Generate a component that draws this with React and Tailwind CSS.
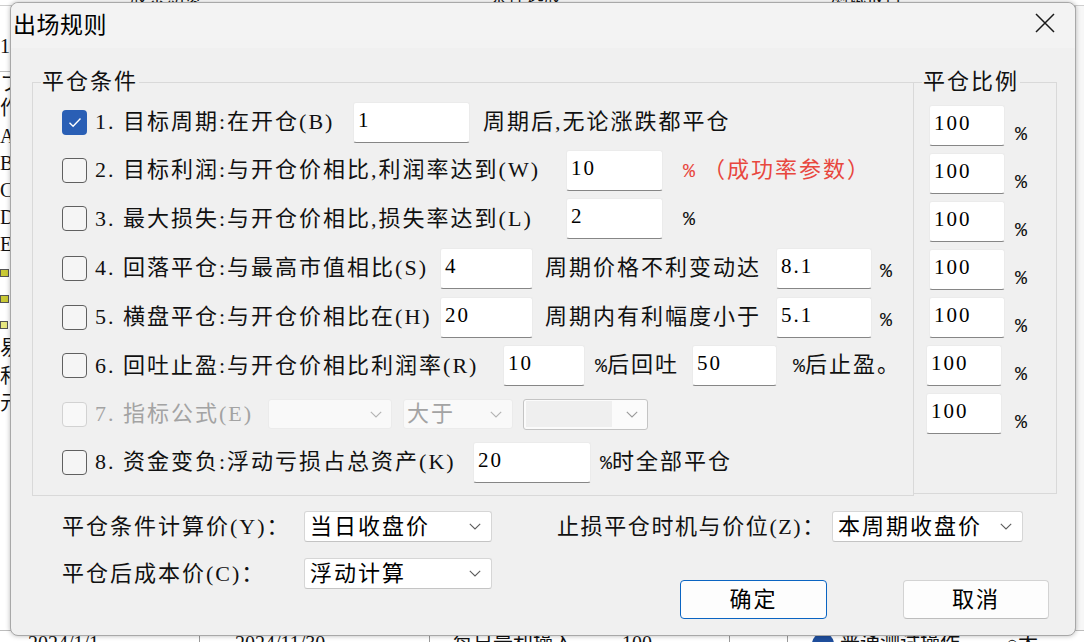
import React from "react";

const serif = "font-['Liberation_Serif','Noto_Sans_CJK_SC',sans-serif]";

function Check({ state }) {
  if (state === "on") {
    return (
      <div className="w-[25px] h-[25px] shrink-0 rounded-[4px] bg-[#2a5fb5] flex items-center justify-center">
        <svg width="14" height="11" viewBox="0 0 14 11">
          <path d="M1.5 5.8l3.6 3.4 7.4-7.7" stroke="#ffffff" strokeWidth="1.4" fill="none" />
        </svg>
      </div>
    );
  }
  if (state === "dis") {
    return <div className="w-[25px] h-[25px] shrink-0 rounded-[4px] border border-[#d2d2d2] bg-[#f8f8f8]" />;
  }
  return <div className="w-[25px] h-[25px] shrink-0 rounded-[4px] border border-[#606060] bg-[#f5f5f5]" />;
}

function Box({ v, w }) {
  return (
    <div
      className={`h-[41px] ${w} shrink-0 bg-white border border-[#ebebeb] border-b-[#868686] rounded-[3px] pl-[4px] pt-[7px] text-[21px] leading-[21px] tracking-[2px] text-black font-['Liberation_Serif',serif]`}
    >
      {v}
    </div>
  );
}

function Chevron({ color = "#5c5c5c" }) {
  return (
    <svg width="12" height="7" viewBox="0 0 12 7" className="shrink-0">
      <path d="M0.8 0.8l5.2 5.2 5.2-5.2" stroke={color} strokeWidth="1.1" fill="none" />
    </svg>
  );
}

function Pct({ cls = "" }) {
  return <span className={`font-['Liberation_Mono',monospace] text-[20px] tracking-normal ${cls}`}>%</span>;
}

function Row({ h, children }) {
  return <div className={`flex items-center ${h} whitespace-nowrap`}>{children}</div>;
}

function RightRow({ v, shift }) {
  return (
    <div className="flex items-center h-[48px]">
      <div className={shift}>
        <Box v={v} w="w-[76px]" />
      </div>
      <span className="ml-[10px] pt-[16px]">
        <Pct />
      </span>
    </div>
  );
}

function Select({ w, text }) {
  return (
    <div
      className={`h-[31px] ${w} shrink-0 flex items-center justify-between bg-white border border-[#d6d6d6] border-b-[#c4c4c4] rounded-[3px] pl-[5px] pr-[10px] text-[22px] leading-none tracking-[2px] text-black`}
    >
      <span>{text}</span>
      <Chevron />
    </div>
  );
}

export default function App() {
  return (
    <div className={`relative w-[1084px] h-[642px] overflow-hidden bg-[#f4f4f4] ${serif} text-[#111111]`}>
      {/* background application */}
      <div className="flex flex-col w-full h-full">
        <div className="h-[6px] overflow-hidden flex pl-[130px] text-[18px] leading-none border-b border-[#cfcfcf] bg-white">
          <span className="w-[360px] -mt-[12px]">股票期货</span>
          <span className="w-[340px] -mt-[12px]">条件选股</span>
          <span className="-mt-[12px]">测试报告</span>
        </div>
        <div className="flex flex-1">
          <div className="w-[10px] bg-white flex flex-col text-[20px] leading-none overflow-hidden">
            <div className="h-[30px]" />
            <span className="h-[26px]">1</span>
            <div className="h-[10px] border-b border-[#bdbdbd]" />
            <span className="h-[26px] pt-[2px]">フ</span>
            <span className="h-[28px]">作</span>
            <span className="h-[27px]">A.</span>
            <span className="h-[27px]">B.</span>
            <span className="h-[27px]">C.</span>
            <span className="h-[27px]">D.</span>
            <span className="h-[26px]">E.</span>
            <div className="h-[26px] flex items-center"><div className="w-[9px] h-[8px] bg-[#c9c935] border border-[#555]" /></div>
            <div className="h-[26px] flex items-center"><div className="w-[9px] h-[8px] bg-[#c9c935] border border-[#555]" /></div>
            <div className="h-[26px] flex items-center"><div className="w-[8px] h-[8px] bg-[#e6e680] border border-[#555]" /></div>
            <span className="h-[28px]">易</span>
            <span className="h-[27px]">和</span>
            <span className="h-[27px]">元</span>
          </div>
          <div className="flex-1" />
          <div className="w-[9px] bg-[#f7f7f7] border-l border-[#c8c8c8]" />
        </div>
        <div className="h-[12px] flex items-start text-[20px] leading-none bg-white border-t border-[#bdbdbd] overflow-hidden">
          <span className="w-[200px] pl-[28px] pt-[2px] border-r border-[#999]">2024/1/1</span>
          <span className="w-[230px] pl-[35px] pt-[2px] border-r border-[#999]">2024/11/30</span>
          <span className="w-[170px] pl-[23px] pt-[2px]">每日最利操入</span>
          <span className="w-[130px] pl-[22px] pt-[2px] border-r border-[#999]">100</span>
          <span className="w-[58px] pl-[10px] pt-[2px] border-r border-[#999]">—</span>
          <span className="w-[218px] pl-[24px] pt-[2px] flex gap-[6px]"><span className="w-[22px] h-[22px] rounded-full bg-[#1f4e9c]" />普通测试操作</span>
          <span className="pt-[2px]">○大</span>
        </div>
      </div>

      {/* dialog window */}
      <div className="absolute left-[10px] top-[2px] w-[1066px] h-[634px] flex flex-col bg-[#f0f0f0] rounded-[8px] border border-[#a8a8a8] shadow-[0_0_5px_rgba(0,0,0,0.28)]">
        {/* title bar */}
        <div className="h-[45px] shrink-0 flex items-center justify-between pl-[2px] pr-[19px] pb-[5px] bg-[#f3f3f3] rounded-t-[8px]">
          <span className="font-['Noto_Sans_CJK_SC',sans-serif] text-[23px] leading-none tracking-[0.5px] text-black">出场规则</span>
          <svg width="22" height="22" viewBox="0 0 22 22">
            <path d="M2 2l18 18M20 2L2 20" stroke="#1a1a1a" strokeWidth="1.5" fill="none" />
          </svg>
        </div>

        {/* body */}
        <div className="flex flex-col pt-[34px] pl-[21px] text-[22px] leading-none tracking-[2px]">
          <div className="flex items-start">
            {/* 平仓条件 group */}
            <div className="relative w-[882px] shrink-0 border border-[#d9d9d9] pl-[29px] pt-[15px] pb-[9px]">
              <span className="absolute -top-[12px] left-[8px] px-[1px] bg-[#f0f0f0]">平仓条件</span>

              <Row h="h-[48px]">
                <Check state="on" />
                <span className="ml-[8px] w-[258px] shrink-0">1. 目标周期:在开仓(B)</span>
                <Box v="1" w="w-[117px]" />
                <span className="ml-[13px]">周期后,无论涨跌都平仓</span>
              </Row>

              <Row h="h-[48px]">
                <Check />
                <span className="ml-[8px] w-[471px] shrink-0">2. 目标利润:与开仓价相比,利润率达到(W)</span>
                <Box v="10" w="w-[97px]" />
                <span className="ml-[20px] text-[#e8473e]">
                  <Pct />
                  <span className="ml-[8px]">（成功率参数）</span>
                </span>
              </Row>

              <Row h="h-[49px]">
                <Check />
                <span className="ml-[8px] w-[471px] shrink-0">3. 最大损失:与开仓价相比,损失率达到(L)</span>
                <Box v="2" w="w-[97px]" />
                <span className="ml-[20px]">
                  <Pct />
                </span>
              </Row>

              <Row h="h-[50px]">
                <Check />
                <span className="ml-[8px] w-[345px] shrink-0">4. 回落平仓:与最高市值相比(S)</span>
                <Box v="4" w="w-[93px]" />
                <span className="ml-[12px] w-[231px] shrink-0">周期价格不利变动达</span>
                <Box v="8.1" w="w-[96px]" />
                <span className="ml-[8px] pt-[5px]">
                  <Pct />
                </span>
              </Row>

              <Row h="h-[48px]">
                <Check />
                <span className="ml-[8px] w-[345px] shrink-0">5. 横盘平仓:与开仓价相比在(H)</span>
                <Box v="20" w="w-[93px]" />
                <span className="ml-[12px] w-[231px] shrink-0">周期内有利幅度小于</span>
                <Box v="5.1" w="w-[96px]" />
                <span className="ml-[8px] pt-[5px]">
                  <Pct />
                </span>
              </Row>

              <Row h="h-[49px]">
                <Check />
                <span className="ml-[8px] w-[408px] shrink-0">6. 回吐止盈:与开仓价相比利润率(R)</span>
                <Box v="10" w="w-[82px]" />
                <span className="ml-[10px] w-[97px] shrink-0">
                  <Pct />
                  后回吐
                </span>
                <Box v="50" w="w-[85px]" />
                <span className="ml-[16px]">
                  <Pct />
                  后止盈。
                </span>
              </Row>

              <Row h="h-[48px]">
                <Check state="dis" />
                <span className="ml-[8px] w-[173px] shrink-0 text-[#a3a3a3]">7. 指标公式(E)</span>
                <div className="h-[30px] w-[124px] shrink-0 flex items-center justify-end pr-[9px] bg-[#f9f9f9] border border-[#ebebeb] rounded-[3px]">
                  <Chevron color="#b3b3b3" />
                </div>
                <div className="ml-[11px] h-[30px] w-[110px] shrink-0 flex items-center justify-between pl-[3px] pr-[10px] bg-[#f9f9f9] border border-[#ebebeb] rounded-[3px] text-[#a3a3a3]">
                  <span>大于</span>
                  <Chevron color="#b3b3b3" />
                </div>
                <div className="ml-[10px] h-[31px] w-[125px] shrink-0 flex items-center justify-between pl-[2px] pr-[9px] bg-[#fbfbfb] border border-[#c4c4c4] rounded-[3px]">
                  <div className="w-[86px] h-[26px] bg-[#efefef]" />
                  <Chevron color="#9a9a9a" />
                </div>
              </Row>

              <Row h="h-[48px]">
                <Check />
                <span className="ml-[8px] w-[378px] shrink-0">8. 资金变负:浮动亏损占总资产(K)</span>
                <Box v="20" w="w-[118px]" />
                <span className="ml-[9px]">
                  <Pct />
                  时全部平仓
                </span>
              </Row>
            </div>

            {/* 平仓比例 group */}
            <div className="relative -ml-[1px] w-[144px] h-[412px] shrink-0 border border-[#d9d9d9] pl-[15px] pt-[18px]">
              <span className="absolute -top-[12px] left-[8px] px-[1px] bg-[#f0f0f0]">平仓比例</span>
              <RightRow v="100" shift="" />
              <RightRow v="100" shift="" />
              <RightRow v="100" shift="" />
              <RightRow v="100" shift="" />
              <RightRow v="100" shift="" />
              <RightRow v="100" shift="-ml-[3px] mr-[3px]" />
              <RightRow v="100" shift="-ml-[3px] mr-[3px]" />
            </div>
          </div>

          {/* bottom settings */}
          <div className="flex mt-[15px] pl-[30px] whitespace-nowrap">
            <div className="flex flex-col gap-[16px]">
              <div className="flex items-center h-[31px]">
                <span className="w-[242px] shrink-0">平仓条件计算价(Y)：</span>
                <Select w="w-[188px]" text="当日收盘价" />
              </div>
              <div className="flex items-center h-[31px]">
                <span className="w-[242px] shrink-0">平仓后成本价(C)：</span>
                <Select w="w-[188px]" text="浮动计算" />
              </div>
            </div>
            <div className="ml-[65px] flex flex-col">
              <div className="flex items-center h-[31px]">
                <span className="w-[275px] shrink-0 tracking-[1.6px]">止损平仓时机与价位(Z)：</span>
                <Select w="w-[191px]" text="本周期收盘价" />
              </div>
              <div className="flex mt-[38px] ml-[123px] gap-[76px]">
                <button className="w-[147px] h-[39px] bg-[#fdfdfd] border border-[#0a64c2] rounded-[4px] text-[22px] tracking-[2px] text-black">
                  确定
                </button>
                <button className="w-[146px] h-[39px] bg-[#fdfdfd] border border-[#d3d3d3] border-b-[#bdbdbd] rounded-[4px] text-[22px] tracking-[2px] text-black">
                  取消
                </button>
              </div>
            </div>
          </div>
        </div>
      </div>
    </div>
  );
}
